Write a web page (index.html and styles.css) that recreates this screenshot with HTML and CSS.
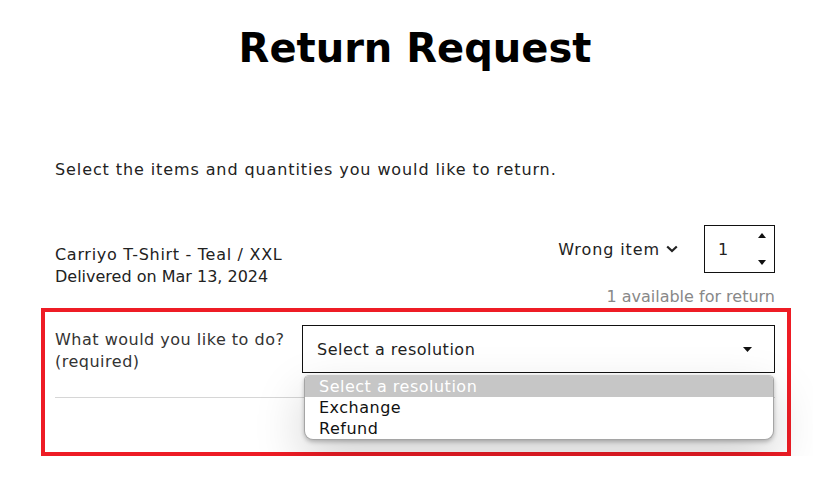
FILE: index.html
```html
<!DOCTYPE html>
<html lang="en">
<head>
<meta charset="utf-8">
<title>Return Request</title>
<link rel="stylesheet" href="styles.css">
</head>
<body>
<main class="page">
  <h1 class="title">Return Request</h1>
  <p class="intro">Select the items and quantities you would like to return.</p>

  <div class="item">
    <div class="item-info">
      <div>Carriyo T-Shirt - Teal / XXL</div>
      <div class="delivered">Delivered on Mar 13, 2024</div>
    </div>
    <div class="item-controls">
      <div class="reason">Wrong item
        <svg class="chev" width="12" height="8" viewBox="0 0 12 8"><path d="M1.2 1.5 L6 6 L10.8 1.5" fill="none" stroke="#222" stroke-width="2.2"/></svg>
      </div>
      <div class="qty">
        <span class="qty-val">1</span>
        <span class="spin">
          <svg width="8" height="5" viewBox="0 0 8 5"><path d="M0 5 L4 0 L8 5 Z" fill="#111"/></svg>
          <svg width="8" height="5" viewBox="0 0 8 5"><path d="M0 0 L8 0 L4 5 Z" fill="#111"/></svg>
        </span>
      </div>
    </div>
  </div>
  <div class="available">1 available for return</div>

  <section class="resolution">
    <div class="res-row">
      <div class="res-label">What would you like to do?<br>(required)</div>
      <div class="select-wrap">
        <div class="select">
          <span>Select a resolution</span>
          <svg width="9" height="5" viewBox="0 0 9 5"><path d="M0 0 L9 0 L4.5 5 Z" fill="#111"/></svg>
        </div>
        <ul class="options">
          <li class="opt opt-active">Select a resolution</li>
          <li class="opt">Exchange</li>
          <li class="opt">Refund</li>
        </ul>
      </div>
    </div>
    <hr class="sep">
  </section>
</main>
</body>
</html>
```

FILE: styles.css
```css
html, body {
  margin: 0;
  padding: 0;
  background: #fff;
}
body {
  font-family: "DejaVu Sans", "Liberation Sans", sans-serif;
  color: #222;
  font-size: 16px;
  letter-spacing: 0.5px;
}
.page {
  width: 720px;
  margin-left: 55px;
}
.title {
  margin: 22px 0 0;
  font-size: 40px;
  line-height: 52px;
  text-align: center;
  font-weight: 700;
  color: #000;
  letter-spacing: 0;
}
.intro {
  margin: 85px 0 0;
  line-height: 22px;
  letter-spacing: 0.9px;
}
.item {
  margin-top: 44px;
  display: flex;
  justify-content: space-between;
  align-items: flex-start;
}
.item-info {
  margin-top: 19px;
  line-height: 22px;
  letter-spacing: 0.7px;
}
.delivered {
  letter-spacing: 0;
}
.item-controls {
  display: flex;
  align-items: center;
  gap: 26px;
}
.reason {
  display: flex;
  align-items: center;
  gap: 6px;
  letter-spacing: 0.9px;
}
.qty {
  box-sizing: border-box;
  width: 71px;
  height: 48px;
  border: 1px solid #111;
  display: flex;
  align-items: center;
  justify-content: space-between;
  padding: 0 8px 0 13px;
}
.spin {
  display: flex;
  flex-direction: column;
  justify-content: space-between;
  height: 32px;
}
.spin svg { display: block; }
.available {
  text-align: right;
  color: #888;
  line-height: 22px;
  margin-top: -2px;
  letter-spacing: 0;
}
.resolution {
  margin: 0 0 0 -14px;
  box-sizing: border-box;
  width: 750px;
  border: 4px solid #ee1c25;
  padding: 13px 12px 54px 10px;
}
.res-row {
  display: flex;
  align-items: flex-start;
}
.res-label {
  width: 247px;
  line-height: 22px;
  margin-top: 4px;
  color: #333;
}
.select-wrap {
  flex: 1;
  position: relative;
}
.select {
  height: 48px;
  box-sizing: border-box;
  border: 1px solid #111;
  display: flex;
  align-items: center;
  justify-content: space-between;
  padding: 0 22px 0 14px;
}
.select svg { display: block; }
.options {
  position: absolute;
  left: 2px;
  right: 1px;
  top: 50px;
  margin: 0;
  padding: 0;
  list-style: none;
  background: #fff;
  border: 1px solid #a5a5a5;
  border-top-color: #c6c6c6;
  border-radius: 5px 5px 9px 9px;
  overflow: hidden;
  box-shadow: 0 2px 4px rgba(0,0,0,0.25), 0 20px 50px rgba(0,0,0,0.18);
  z-index: 2;
}
.opt {
  height: 21px;
  line-height: 21px;
  padding-left: 14px;
  color: #111;
}
.opt-active {
  background: #c6c6c6;
  color: #fff;
}
.sep {
  margin: 24px 0 0;
  border: 0;
  border-top: 1px solid #d6d6d6;
}
```
